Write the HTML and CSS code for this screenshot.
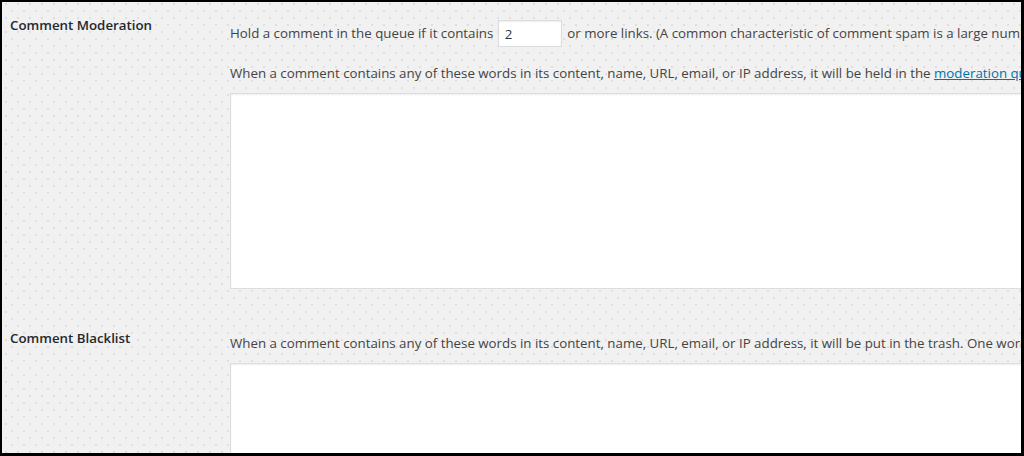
FILE: index.html
```html
<!DOCTYPE html>
<html>
<head>
<meta charset="utf-8">
<link rel="stylesheet" href="styles.css">
</head>
<body>
<div class="frame">
  <div class="row row-moderation">
    <div class="label">Comment Moderation</div>
    <div class="field">
      <p class="line line-links">Hold a comment in the queue if it contains <input class="num" type="text" value="2"> or more links. (A common characteristic of comment spam is a large number of hyperlinks.)</p>
      <p class="line line-desc">When a comment contains any of these words in its content, name, URL, email, or IP address, it will be held in the <a href="#">moderation queue</a>. One word or IP address per line. It will match inside words, so “press” will match “WordPress”.</p>
      <textarea class="box box-moderation"></textarea>
    </div>
  </div>
  <div class="row row-blacklist">
    <div class="label">Comment Blacklist</div>
    <div class="field">
      <p class="line line-desc">When a comment contains any of these words in its content, name, URL, email, or IP address, it will be put in the trash. One word or IP address per line. It will match inside words, so “press” will match “WordPress”.</p>
      <textarea class="box box-blacklist"></textarea>
    </div>
  </div>
</div>
</body>
</html>
```

FILE: styles.css
```css
html, body {
  margin: 0;
  padding: 0;
  background: #000;
}
.frame {
  box-sizing: border-box;
  width: 1024px;
  height: 456px;
  border-top: 2px solid #000;
  border-left: 2px solid #000;
  border-right: 3px solid #000;
  border-bottom: 3px solid #000;
  overflow: hidden;
  background-color: #f1f1f1;
  background-image:
    radial-gradient(circle, #dedede 0.7px, transparent 1px),
    radial-gradient(circle, #dedede 0.7px, transparent 1px);
  background-size: 12px 14px, 12px 14px;
  background-position: 4px 2px, 10px 9px;
  font-family: "Open Sans", "Noto Sans", sans-serif;
  color: #444;
}
.row {
  display: flex;
  white-space: nowrap;
}
.label {
  width: 228px;
  flex: none;
  box-sizing: border-box;
  padding-left: 8px;
  font-size: 13.3px;
  font-weight: 600;
  line-height: 20px;
  color: #23282d;
}
.field {
  flex: none;
  width: 1200px;
  display: flex;
  flex-direction: column;
  align-items: flex-start;
}
.line {
  margin: 0;
  font-size: 13.3px;
  line-height: 20px;
}
.row-moderation .label { margin-top: 13px; }
.row-moderation .field { padding-top: 18px; }
.line-links {
  height: 27px;
  line-height: 27px;
}
.num {
  box-sizing: border-box;
  width: 64px;
  height: 27px;
  margin: 0 2px 0 1px;
  padding: 0 6px;
  border: 1px solid #ddd;
  background: #fff;
  font: 13.3px "Open Sans", "Noto Sans", sans-serif;
  color: #32373c;
  vertical-align: top;
  box-shadow: inset 0 1px 2px rgba(0,0,0,0.07);
}
.row-moderation .line-desc { margin-top: 16px; }
a {
  color: #0073aa;
  text-decoration: underline;
}
.box {
  box-sizing: border-box;
  display: block;
  width: 900px;
  margin: 10px 0 0 0;
  border: 1px solid #ddd;
  background: #fff;
  resize: none;
  box-shadow: inset 0 1px 2px rgba(0,0,0,0.07);
}
.box-moderation { height: 196px; }
.row-blacklist .label { margin-top: 39px; }
.row-blacklist .field { padding-top: 44px; }
.box-blacklist { height: 120px; }
```
